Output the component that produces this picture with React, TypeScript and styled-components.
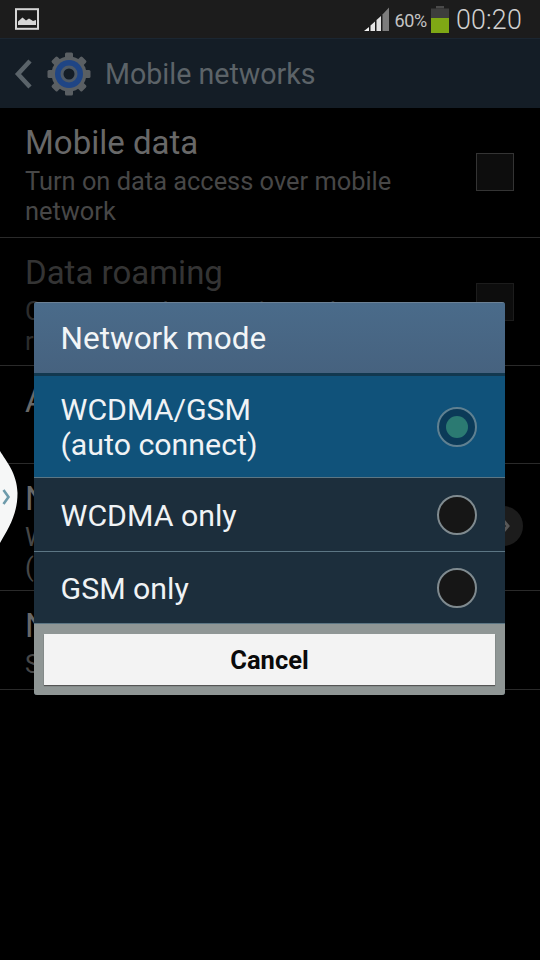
import React from "react";
import styled, { createGlobalStyle } from "styled-components";

const Global = createGlobalStyle`
  html, body { margin: 0; padding: 0; background: #000; }
  #root { width: 540px; height: 960px; overflow: hidden; }
  * { box-sizing: border-box; }
`;

const Screen = styled.div`
  position: relative;
  width: 540px;
  height: 960px;
  background: #000;
  font-family: Roboto, "Liberation Sans", sans-serif;
  overflow: hidden;
`;

const StatusBar = styled.div`
  height: 38px;
  background: #1c1c1c;
  display: flex;
  align-items: center;
  padding: 0 18px 0 15px;
  color: #c9c9c9;
`;

const StatusRight = styled.div`
  margin-left: auto;
  display: flex;
  align-items: center;
`;

const Percent = styled.span`
  font-size: 18px;
  letter-spacing: -0.3px;
  margin: 2px 4px 0 4px;
  color: #c4c4c4;
`;

const Clock = styled.span`
  font-size: 26.8px;
  font-weight: 300;
  margin-left: 7px;
  padding-top: 1px;
  letter-spacing: 0.2px;
  color: #d0d0d0;
`;

const ActionBar = styled.div`
  height: 70px;
  background: #141d26;
  border-top: 1px solid #1b2631;
  display: flex;
  align-items: center;
  padding-left: 14px;
  gap: 15px;
`;

const ActionTitle = styled.span`
  font-size: 28.6px;
  color: #5c6368;
  margin-left: -1px;
`;

const SettingRow = styled.div<{ $h: number }>`
  height: ${(p) => p.$h}px;
  padding: 15px 26px 0 25px;
  border-bottom: 1px solid #2a2a2a;
  display: flex;
  justify-content: space-between;
`;

const RowText = styled.div`
  width: 410px;
`;

const RowTitle = styled.div<{ $dim?: boolean }>`
  font-size: 33px;
  line-height: 39px;
  color: ${(p) => (p.$dim ? "#343434" : "#686868")};
`;

const RowSub = styled.div<{ $dim?: boolean }>`
  font-size: 25.4px;
  line-height: 30px;
  margin-top: 4px;
  color: ${(p) => (p.$dim ? "#2c2c2c" : "#474747")};
`;

const Check = styled.div<{ $dim?: boolean }>`
  width: 38px;
  height: 38px;
  margin-top: 30px;
  background: #0d0d0d;
  border: 1px solid ${(p) => (p.$dim ? "#1c1c1c" : "#343434")};
  flex: none;
`;

const RoundArrow = styled.div`
  width: 40px;
  height: 40px;
  border-radius: 50%;
  background: #1c1c1c;
  flex: none;
  margin: 27px -9px 0 0;
  display: flex;
  align-items: center;
  justify-content: center;
  padding-left: 6px;
`;

const Edge = styled.svg`
  position: absolute;
  left: 0;
  top: 445px;
`;

const Dialog = styled.div`
  position: absolute;
  left: 34px;
  top: 302px;
  width: 471px;
  height: 393px;
  border-radius: 3px;
  overflow: hidden;
  background: #1c2e3c;
  display: flex;
  flex-direction: column;
  box-shadow: inset 1px 0 0 #3d4c58, inset -1px 0 0 #3d4c58;
`;

const DialogHeader = styled.div`
  height: 71px;
  flex: none;
  background: linear-gradient(#4a6b8a, #46627f);
  border-top: 1px solid #6c8195;
  display: flex;
  align-items: center;
  padding: 0 0 0 26.5px;
  font-size: 31.5px;
  color: #f2f5f7;
`;

const HeaderRule = styled.div`
  height: 3px;
  flex: none;
  background: #12384f;
`;

const Option = styled.div<{ $h: number; $sel?: boolean }>`
  height: ${(p) => p.$h}px;
  flex: none;
  background: ${(p) => (p.$sel ? "#10527a" : "#1c2e3c")};
  border-bottom: 1px solid #5c7684;
  display: flex;
  align-items: center;
  justify-content: space-between;
  padding: 0 28px 0 26.5px;
`;

const OptionLabel = styled.div`
  font-size: 30.3px;
  line-height: 35px;
  padding-top: 1px;
  color: #f0f3f5;
`;

const Radio = styled.div<{ $sel?: boolean }>`
  width: 40px;
  height: 40px;
  border-radius: 50%;
  border: 2px solid ${(p) => (p.$sel ? "#5f8091" : "#7f8a8f")};
  background: ${(p) => (p.$sel ? "#0b3a58" : "#161616")};
  display: flex;
  align-items: center;
  justify-content: center;
`;

const RadioDot = styled.div`
  width: 22px;
  height: 22px;
  border-radius: 50%;
  background: #2b7a72;
`;

const DialogFooter = styled.div`
  flex: 1;
  background: #8f9695;
  padding: 10px;
  display: flex;
`;

const CancelButton = styled.div`
  flex: 1;
  background: #f3f3f3;
  box-shadow: 0 1px 1px #555;
  display: flex;
  align-items: center;
  justify-content: center;
  font-size: 25.5px;
  font-weight: 700;
  color: #0a0a0a;
`;

const PictureIcon = () => (
  <svg width="24" height="22" viewBox="0 0 24 22">
    <rect x="1" y="1.2" width="22" height="19.6" fill="none" stroke="#d6d6d6" strokeWidth="2" />
    <path d="M3 17 V13.5 L7.5 9.5 L11 12.5 L14 10.5 L18 13 L21 12 V17 Z" fill="#d6d6d6" />
  </svg>
);

const SignalIcon = () => (
  <svg width="26" height="26" viewBox="0 0 26 26">
    <path d="M0 25 L5 21 V25 Z" fill="#f2f2f2" />
    <path d="M6.5 25 V19.5 L11 15.5 V25 Z" fill="#e6e6e6" />
    <path d="M12.5 25 V14 L17 10 V25 Z" fill="#e0e0e0" />
    <path d="M18.5 25 V8.5 L25 1.5 V25 Z" fill="#7c7c7c" />
  </svg>
);

const BatteryIcon = () => (
  <svg width="18" height="27" viewBox="0 0 18 27">
    <rect x="5" y="0" width="8" height="2.5" fill="#4a4a4a" />
    <rect x="0" y="2.5" width="18" height="10" fill="#3d3d3d" />
    <rect x="0" y="12" width="18" height="15" fill="#7fa815" />
  </svg>
);

const BackIcon = () => (
  <svg width="18" height="30" viewBox="0 0 18 30">
    <path d="M16 2 L4 15 L16 28" fill="none" stroke="#5a6369" strokeWidth="4.5" />
  </svg>
);

const GearIcon = () => {
  const teeth = Array.from({ length: 8 }, (_, i) => i * 45);
  return (
    <svg width="44" height="44" viewBox="0 0 44 44">
      {teeth.map((a) => (
        <rect key={a} x="18" y="0.5" width="8" height="8" rx="1.5" fill="#5a5f63" transform={`rotate(${a} 22 22)`} />
      ))}
      <circle cx="22" cy="22" r="17.5" fill="#5a5f63" />
      <circle cx="22" cy="22" r="14" fill="#1f4585" />
      <circle cx="22" cy="22" r="8.5" fill="#4f5a66" />
      <circle cx="22" cy="22" r="5.5" fill="#141d26" />
    </svg>
  );
};

const ChevronSmall = () => (
  <svg width="10" height="14" viewBox="0 0 10 14">
    <path d="M2 1 L7 7 L2 13" fill="none" stroke="#585858" strokeWidth="3" />
  </svg>
);

export default function App() {
  return (
    <Screen>
      <Global />
      <StatusBar>
        <PictureIcon />
        <StatusRight>
          <SignalIcon />
          <Percent>60%</Percent>
          <BatteryIcon />
          <Clock>00:20</Clock>
        </StatusRight>
      </StatusBar>
      <ActionBar>
        <BackIcon />
        <GearIcon />
        <ActionTitle>Mobile networks</ActionTitle>
      </ActionBar>
      <SettingRow $h={130}>
        <RowText>
          <RowTitle>Mobile data</RowTitle>
          <RowSub>Turn on data access over mobile network</RowSub>
        </RowText>
        <Check />
      </SettingRow>
      <SettingRow $h={128}>
        <RowText>
          <RowTitle $dim>Data roaming</RowTitle>
          <RowSub $dim>Connect to data services when roaming</RowSub>
        </RowText>
        <Check $dim />
      </SettingRow>
      <SettingRow $h={98}>
        <RowText>
          <RowTitle>Access Point Names</RowTitle>
        </RowText>
      </SettingRow>
      <SettingRow $h={127}>
        <RowText>
          <RowTitle>Network mode</RowTitle>
          <RowSub>
            WCDMA/GSM
            <br />
            (auto connect)
          </RowSub>
        </RowText>
        <RoundArrow>
          <ChevronSmall />
        </RoundArrow>
      </SettingRow>
      <SettingRow $h={99}>
        <RowText>
          <RowTitle>Network operators</RowTitle>
          <RowSub>Search now</RowSub>
        </RowText>
      </SettingRow>
      <Edge width="20" height="110" viewBox="0 0 20 110">
        <path d="M0 6 C6 16 17 28 17.5 48 C17.5 70 8 84 0 98 Z" fill="#f6f7f7" />
        <path d="M3.5 45 L8.5 52 L3.5 59" fill="none" stroke="#6d9bab" strokeWidth="2.6" />
      </Edge>
      <Dialog>
        <DialogHeader>Network mode</DialogHeader>
        <HeaderRule />
        <Option $h={102} $sel>
          <OptionLabel>
            WCDMA/GSM
            <br />
            (auto connect)
          </OptionLabel>
          <Radio $sel>
            <RadioDot />
          </Radio>
        </Option>
        <Option $h={74}>
          <OptionLabel>WCDMA only</OptionLabel>
          <Radio />
        </Option>
        <Option $h={72}>
          <OptionLabel>GSM only</OptionLabel>
          <Radio />
        </Option>
        <DialogFooter>
          <CancelButton>Cancel</CancelButton>
        </DialogFooter>
      </Dialog>
    </Screen>
  );
}
